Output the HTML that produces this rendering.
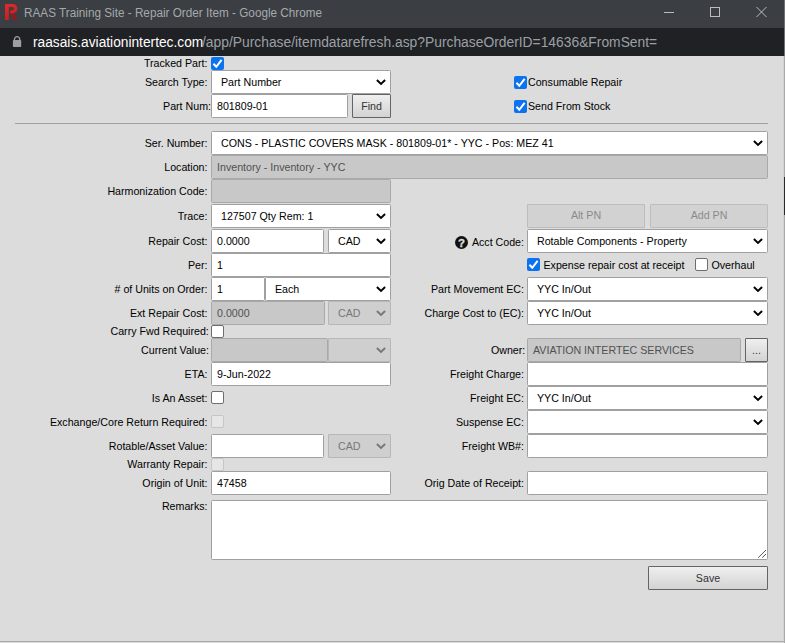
<!DOCTYPE html>
<html lang="en"><head><meta charset="utf-8"><title>RAAS Training Site - Repair Order Item</title>
<style>
html,body{margin:0;padding:0}
body{width:785px;height:643px;overflow:hidden;position:relative;background:#dcdcdc;font-family:"Liberation Sans",sans-serif;font-size:10.67px;color:#000}
#title{position:absolute;left:0;top:0;width:785px;height:28px;background:#3b3e42}
#title .t{position:absolute;left:24px;top:6px;font-size:12px;line-height:14px;color:#a6a9ac;white-space:nowrap;transform-origin:0 0;transform:scaleX(0.978)}
#addr{position:absolute;left:0;top:28px;width:785px;height:28px;background:#202124}
#addr .u{position:absolute;top:6px;font-size:14px;line-height:16px;white-space:nowrap;transform-origin:0 0}
#addr .u1{left:33.4px;color:#fff;transform:scaleX(0.981)}
#addr .u2{left:202.4px;color:#9aa0a6;transform:scaleX(0.988)}
#page{position:absolute;left:0;top:56px;width:785px;height:587px;background:#dcdcdc}
#rb{position:absolute;left:784px;top:0;width:1px;height:643px;background:#a9a9a9}
#rb2{position:absolute;left:783px;top:56px;width:1px;height:585px;background:#d2d2d2}
#rbt{position:absolute;left:784px;top:0;width:1px;height:56px;background:#6f7174}
#rbd{position:absolute;left:784px;top:177px;width:1px;height:38px;background:#2a2a2a}
#bb{position:absolute;left:0;top:641px;width:785px;height:1px;background:#a9a9a9}
.lbl,.txt{position:absolute;white-space:nowrap;line-height:14px;height:14px;font-size:10.67px}
.f{position:absolute;box-sizing:border-box;border:1px solid #a0a0a0;border-radius:1.5px;background:#fff;white-space:nowrap;overflow:hidden}
.f span{position:absolute;top:0;bottom:0;margin:auto;height:14px;line-height:14px;left:5px}
.sel span{left:9px}
.f.dis{background:#c8c8c8;border-color:#a9a9a9;color:#515151}
.sel.dis{background:#cfcfcf;border-color:#b7b7b7;border-radius:1px;color:#777}
.chev{position:absolute;right:4px;top:50%;margin-top:-3px;color:#000}
.sel.dis .chev{color:#777}
.btn{position:absolute;box-sizing:border-box;border:1px solid #646464;border-radius:1px;background:linear-gradient(#efefef,#d3d3d3);color:#333;text-align:center}
.btn span{position:absolute;left:0;right:0;top:0;bottom:0;margin:auto;height:14px;line-height:14px}
.btn.dis{border-color:#bdbdbd;background:#d2d2d2;color:#8a8a8a}
.btn.dis span{top:-2px}
.cb{position:absolute;box-sizing:border-box;width:13px;height:13px;border-radius:2px}
.cb svg{display:block}
.cb.on{background:#0b72f0}
.cb.off{background:#fff;border:1px solid #6e6e6e}
.cb.dis{background:#e6e6e6;border:1px solid #c6c6c6}
.hr{position:absolute;left:15px;top:123px;width:753px;height:1px;background:#a0a0a0}
.q{position:absolute}
.grip{position:absolute;right:0;bottom:0}
</style></head><body>
<div id="title">
<svg style="position:absolute;left:0;top:0" width="28" height="28" viewBox="0 0 28 28"><defs><linearGradient id="rg" x1="0" y1="0" x2="0.3" y2="1"><stop offset="0" stop-color="#e62a2a"/><stop offset="1" stop-color="#c32024"/></linearGradient></defs><path d="M10.1 12.9 L13.5 12.3 L17.5 20 H13.3 Z" fill="#8f1c1d"/><path d="M5 3.9 H12 C15.6 3.9 17.4 5.9 17.4 8.6 C17.4 11.3 15.6 13.2 12.6 13.4 L10.2 13.4 L10.2 10.4 L12 10.4 C13.4 10.4 13.9 9.6 13.9 8.7 C13.9 7.8 13.4 7.1 12 7.1 H8.9 V20 H5 Z" fill="url(#rg)"/></svg>
<div class="t">RAAS Training Site - Repair Order Item - Google Chrome</div>
<svg style="position:absolute;left:660px;top:0" width="125" height="28" viewBox="0 0 125 28"><g stroke="#bbbcbe" stroke-width="1" fill="none"><path d="M4 12.5 H14"/><rect x="50.5" y="7.5" width="9" height="9"/><path d="M96.5 7 L106.5 17 M106.5 7 L96.5 17"/></g></svg>
</div>
<div id="addr">
<svg style="position:absolute;left:12px;top:7px" width="10" height="13" viewBox="0 0 10 13"><path d="M2.5 5.4 V4.2 A2.6 2.6 0 0 1 7.7 4.2 V5.4" fill="none" stroke="#9aa0a6" stroke-width="1.3"/><rect x="0.9" y="4.9" width="8.3" height="7.1" rx="0.8" fill="#9aa0a6"/></svg>
<div class="u u1">raasais.aviationintertec.com</div><div class="u u2">/app/Purchase/itemdatarefresh.asp?PurchaseOrderID=14636&amp;FromSent=</div>
</div>
<div id="page"></div>
<div class="lbl" style="right:577.5px;top:56px">Tracked Part:</div>
<div class="cb on" style="left:211px;top:57px"><svg width="13" height="13" viewBox="0 0 13 13"><path d="M2.4 6.8 L5.3 9.8 L10.6 2.9" fill="none" stroke="#fff" stroke-width="2"/></svg></div>
<div class="lbl" style="right:577.5px;top:75px">Search Type:</div>
<div class="f sel" style="left:211px;top:70px;width:180px;height:24px;"><span>Part Number</span><svg class="chev" width="10" height="7" viewBox="0 0 10 7"><path d="M0.9 1 L5 5 L9.1 1" fill="none" stroke="currentColor" stroke-width="1.9"/></svg></div>
<div class="lbl" style="right:574px;top:99px">Part Num:</div>
<div class="f inp" style="left:211px;top:94px;width:137px;height:24px;"><span>801809-01</span></div>
<div class="btn" style="left:352px;top:94px;width:39px;height:24px;"><span>Find</span></div>
<div class="hr"></div>
<div class="lbl" style="right:577.5px;top:136px">Ser. Number:</div>
<div class="f sel" style="left:211px;top:131px;width:557px;height:24px;"><span>CONS - PLASTIC COVERS MASK - 801809-01* - YYC - Pos: MEZ 41</span><svg class="chev" width="10" height="7" viewBox="0 0 10 7"><path d="M0.9 1 L5 5 L9.1 1" fill="none" stroke="currentColor" stroke-width="1.9"/></svg></div>
<div class="lbl" style="right:577.5px;top:160px">Location:</div>
<div class="f inp dis" style="left:211px;top:155px;width:557px;height:24px;"><span>Inventory - Inventory - YYC</span></div>
<div class="lbl" style="right:577.5px;top:184px">Harmonization Code:</div>
<div class="f inp dis" style="left:211px;top:179px;width:180px;height:24px;"><span></span></div>
<div class="lbl" style="right:577.5px;top:209px">Trace:</div>
<div class="f sel" style="left:211px;top:204px;width:180px;height:24px;"><span>127507 Qty Rem: 1</span><svg class="chev" width="10" height="7" viewBox="0 0 10 7"><path d="M0.9 1 L5 5 L9.1 1" fill="none" stroke="currentColor" stroke-width="1.9"/></svg></div>
<div class="lbl" style="right:577.5px;top:234px">Repair Cost:</div>
<div class="f inp" style="left:211px;top:229px;width:113px;height:24px;"><span>0.0000</span></div>
<div class="f sel" style="left:328px;top:229px;width:63px;height:24px;"><span>CAD</span><svg class="chev" width="10" height="7" viewBox="0 0 10 7"><path d="M0.9 1 L5 5 L9.1 1" fill="none" stroke="currentColor" stroke-width="1.9"/></svg></div>
<div class="lbl" style="right:577.5px;top:258px">Per:</div>
<div class="f inp" style="left:211px;top:253px;width:180px;height:24px;"><span>1</span></div>
<div class="lbl" style="right:577.5px;top:282px"># of Units on Order:</div>
<div class="f inp" style="left:211px;top:277px;width:54px;height:24px;"><span>1</span></div>
<div class="f sel" style="left:265px;top:277px;width:126px;height:24px;"><span>Each</span><svg class="chev" width="10" height="7" viewBox="0 0 10 7"><path d="M0.9 1 L5 5 L9.1 1" fill="none" stroke="currentColor" stroke-width="1.9"/></svg></div>
<div class="lbl" style="right:577.5px;top:306px">Ext Repair Cost:</div>
<div class="f inp dis" style="left:211px;top:301px;width:114px;height:24px;"><span>0.0000</span></div>
<div class="f sel dis" style="left:328px;top:301px;width:63px;height:24px;"><span>CAD</span><svg class="chev" width="10" height="7" viewBox="0 0 10 7"><path d="M0.9 1 L5 5 L9.1 1" fill="none" stroke="currentColor" stroke-width="1.9"/></svg></div>
<div class="lbl" style="right:576.2px;top:324px">Carry Fwd Required:</div>
<div class="cb off" style="left:211px;top:325px"></div>
<div class="lbl" style="right:576.0px;top:343px">Current Value:</div>
<div class="f inp dis" style="left:211px;top:338px;width:117px;height:24px;"><span></span></div>
<div class="f sel dis" style="left:328px;top:338px;width:63px;height:24px;"><span></span><svg class="chev" width="10" height="7" viewBox="0 0 10 7"><path d="M0.9 1 L5 5 L9.1 1" fill="none" stroke="currentColor" stroke-width="1.9"/></svg></div>
<div class="lbl" style="right:577.5px;top:367px">ETA:</div>
<div class="f inp" style="left:211px;top:362px;width:180px;height:24px;"><span>9-Jun-2022</span></div>
<div class="lbl" style="right:577.5px;top:391px">Is An Asset:</div>
<div class="cb off" style="left:211px;top:391px"></div>
<div class="lbl" style="right:577.5px;top:415px">Exchange/Core Return Required:</div>
<div class="cb dis" style="left:211px;top:415px"></div>
<div class="lbl" style="right:577.5px;top:439px">Rotable/Asset Value:</div>
<div class="f inp" style="left:211px;top:434px;width:113px;height:24px;"><span></span></div>
<div class="f sel dis" style="left:328px;top:434px;width:63px;height:24px;"><span>CAD</span><svg class="chev" width="10" height="7" viewBox="0 0 10 7"><path d="M0.9 1 L5 5 L9.1 1" fill="none" stroke="currentColor" stroke-width="1.9"/></svg></div>
<div class="lbl" style="right:577.5px;top:457px">Warranty Repair:</div>
<div class="cb dis" style="left:211px;top:458px"></div>
<div class="lbl" style="right:577.5px;top:476px">Origin of Unit:</div>
<div class="f inp" style="left:211px;top:471px;width:180px;height:24px;"><span>47458</span></div>
<div class="lbl" style="right:577.5px;top:499px">Remarks:</div>
<div class="f inp ta" style="left:211px;top:500px;width:557px;height:60px;"><svg class="grip" width="11" height="11" viewBox="0 0 11 11"><path d="M2.2 9.7 L10 2 M6.2 9.7 L10 6" stroke="#505050" stroke-width="0.95" fill="none"/></svg></div>
<div class="btn" style="left:648px;top:566px;width:120px;height:24px;"><span>Save</span></div>
<div class="cb on" style="left:514px;top:76px"><svg width="13" height="13" viewBox="0 0 13 13"><path d="M2.4 6.8 L5.3 9.8 L10.6 2.9" fill="none" stroke="#fff" stroke-width="2"/></svg></div>
<div class="txt" style="left:528px;top:75px">Consumable Repair</div>
<div class="cb on" style="left:514px;top:100px"><svg width="13" height="13" viewBox="0 0 13 13"><path d="M2.4 6.8 L5.3 9.8 L10.6 2.9" fill="none" stroke="#fff" stroke-width="2"/></svg></div>
<div class="txt" style="left:528px;top:99px">Send From Stock</div>
<div class="btn dis" style="left:527px;top:204px;width:118px;height:24px;"><span>Alt PN</span></div>
<div class="btn dis" style="left:650px;top:204px;width:118px;height:24px;"><span>Add PN</span></div>
<div class="lbl" style="right:261px;top:235px">Acct Code:</div>
<svg class="q" style="left:454.5px;top:235.5px" width="13" height="13" viewBox="0 0 13 13"><circle cx="6.5" cy="6.5" r="6.5" fill="#111"/><text x="6.5" y="10.6" text-anchor="middle" font-family="Liberation Sans, sans-serif" font-weight="bold" font-size="11.4" fill="#dcdcdc" stroke="#dcdcdc" stroke-width="0.35">?</text></svg>
<div class="f sel" style="left:527px;top:229px;width:241px;height:24px;"><span>Rotable Components - Property</span><svg class="chev" width="10" height="7" viewBox="0 0 10 7"><path d="M0.9 1 L5 5 L9.1 1" fill="none" stroke="currentColor" stroke-width="1.9"/></svg></div>
<div class="cb on" style="left:527px;top:258px"><svg width="13" height="13" viewBox="0 0 13 13"><path d="M2.4 6.8 L5.3 9.8 L10.6 2.9" fill="none" stroke="#fff" stroke-width="2"/></svg></div>
<div class="txt" style="left:543.5px;top:258px">Expense repair cost at receipt</div>
<div class="cb off" style="left:695px;top:258px"></div>
<div class="txt" style="left:711.5px;top:258px">Overhaul</div>
<div class="lbl" style="right:261px;top:282px">Part Movement EC:</div>
<div class="f sel" style="left:527px;top:277px;width:241px;height:24px;"><span>YYC In/Out</span><svg class="chev" width="10" height="7" viewBox="0 0 10 7"><path d="M0.9 1 L5 5 L9.1 1" fill="none" stroke="currentColor" stroke-width="1.9"/></svg></div>
<div class="lbl" style="right:261px;top:306px">Charge Cost to (EC):</div>
<div class="f sel" style="left:527px;top:301px;width:241px;height:24px;"><span>YYC In/Out</span><svg class="chev" width="10" height="7" viewBox="0 0 10 7"><path d="M0.9 1 L5 5 L9.1 1" fill="none" stroke="currentColor" stroke-width="1.9"/></svg></div>
<div class="lbl" style="right:259.70000000000005px;top:343px">Owner:</div>
<div class="f inp dis" style="left:527px;top:338px;width:214px;height:24px;"><span>AVIATION INTERTEC SERVICES</span></div>
<div class="btn" style="left:745px;top:338px;width:23px;height:24px;"><span>...</span></div>
<div class="lbl" style="right:261px;top:367px">Freight Charge:</div>
<div class="f inp" style="left:527px;top:362px;width:241px;height:24px;"><span></span></div>
<div class="lbl" style="right:261px;top:391px">Freight EC:</div>
<div class="f sel" style="left:527px;top:386px;width:241px;height:24px;"><span>YYC In/Out</span><svg class="chev" width="10" height="7" viewBox="0 0 10 7"><path d="M0.9 1 L5 5 L9.1 1" fill="none" stroke="currentColor" stroke-width="1.9"/></svg></div>
<div class="lbl" style="right:261px;top:415px">Suspense EC:</div>
<div class="f sel" style="left:527px;top:410px;width:241px;height:24px;"><span></span><svg class="chev" width="10" height="7" viewBox="0 0 10 7"><path d="M0.9 1 L5 5 L9.1 1" fill="none" stroke="currentColor" stroke-width="1.9"/></svg></div>
<div class="lbl" style="right:261px;top:439px">Freight WB#:</div>
<div class="f inp" style="left:527px;top:434px;width:241px;height:24px;"><span></span></div>
<div class="lbl" style="right:261px;top:476px">Orig Date of Receipt:</div>
<div class="f inp" style="left:527px;top:471px;width:241px;height:24px;"><span></span></div>
<div id="rb"></div><div id="rb2"></div><div id="rbt"></div><div id="rbd"></div><div id="bb"></div>
</body></html>
